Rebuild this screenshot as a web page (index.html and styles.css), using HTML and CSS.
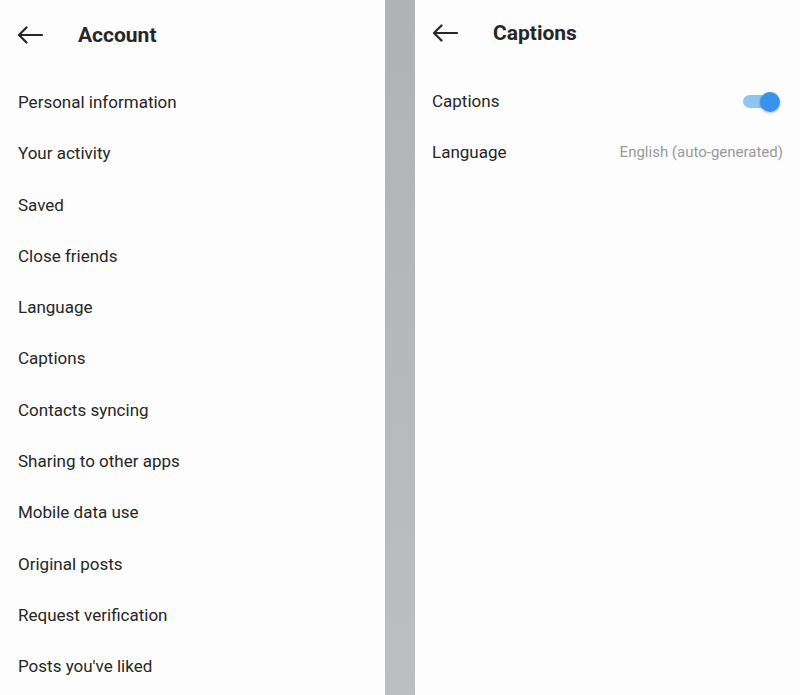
FILE: index.html
```html
<!DOCTYPE html>
<html>
<head>
<meta charset="utf-8">
<link rel="stylesheet" href="styles.css">
</head>
<body>
<div class="screen">
  <section class="panel left">
    <header class="bar">
      <svg class="back" width="26" height="18" viewBox="0 0 26 18"><path d="M25 9H2M9.5 1.5L2 9l7.5 7.5" fill="none" stroke="#262626" stroke-width="2.2" stroke-linecap="round" stroke-linejoin="round"/></svg>
      <h1 class="title">Account</h1>
    </header>
    <ul class="list">
      <li>Personal information</li>
      <li>Your activity</li>
      <li>Saved</li>
      <li>Close friends</li>
      <li>Language</li>
      <li>Captions</li>
      <li>Contacts syncing</li>
      <li>Sharing to other apps</li>
      <li>Mobile data use</li>
      <li>Original posts</li>
      <li>Request verification</li>
      <li>Posts you've liked</li>
    </ul>
  </section>
  <div class="divider"></div>
  <section class="panel right">
    <header class="bar bar-right">
      <svg class="back" width="26" height="18" viewBox="0 0 26 18"><path d="M25 9H2M9.5 1.5L2 9l7.5 7.5" fill="none" stroke="#262626" stroke-width="2.2" stroke-linecap="round" stroke-linejoin="round"/></svg>
      <h1 class="title">Captions</h1>
    </header>
    <ul class="list list-right">
      <li class="row"><span>Captions</span><span class="toggle"><span class="track"></span><span class="thumb"></span></span></li>
      <li class="row"><span>Language</span><span class="value">English (auto-generated)</span></li>
    </ul>
  </section>
</div>
</body>
</html>
```
FILE: styles.css
```css
html, body {
  margin: 0;
  padding: 0;
  background: #fff;
}
body {
  font-family: Roboto, "Noto Sans", sans-serif;
  color: #262626;
}
.screen {
  display: flex;
  width: 800px;
  height: 695px;
  overflow: hidden;
}
.panel {
  background: #fdfdfd;
}
.left {
  width: 385px;
}
.divider {
  width: 30px;
  background: linear-gradient(#b0b3b4, #bbbfc0);
}
.right {
  flex: 1;
  padding-right: 17px;
}
.bar {
  display: flex;
  align-items: center;
  height: 70px;
  padding-left: 17px;
}
.bar-right {
  height: 66px;
}
.back {
  display: block;
  flex: none;
}
.title {
  margin: 0 0 0 35px;
  font-size: 21px;
  font-weight: 700;
  color: #262626;
}
.list {
  list-style: none;
  margin: 0;
  padding: 7px 0 0 18px;
}
.list li {
  height: 51.3px;
  line-height: 51.3px;
  font-size: 17px;
  color: #262626;
}
.list-right {
  padding: 10px 0 0 17px;
}
.row {
  display: flex;
  justify-content: space-between;
  align-items: center;
}
.value {
  font-size: 15px;
  color: #999;
}
.toggle {
  position: relative;
  width: 40px;
  height: 22px;
  display: flex;
  align-items: center;
}
.track {
  display: block;
  width: 34px;
  height: 13px;
  border-radius: 7px;
  background: #8ec5f6;
}
.thumb {
  position: absolute;
  right: 3px;
  top: 1px;
  width: 20px;
  height: 20px;
  border-radius: 50%;
  background: #3893ec;
  box-shadow: 0 1px 3px rgba(0,0,0,0.3);
}
```
